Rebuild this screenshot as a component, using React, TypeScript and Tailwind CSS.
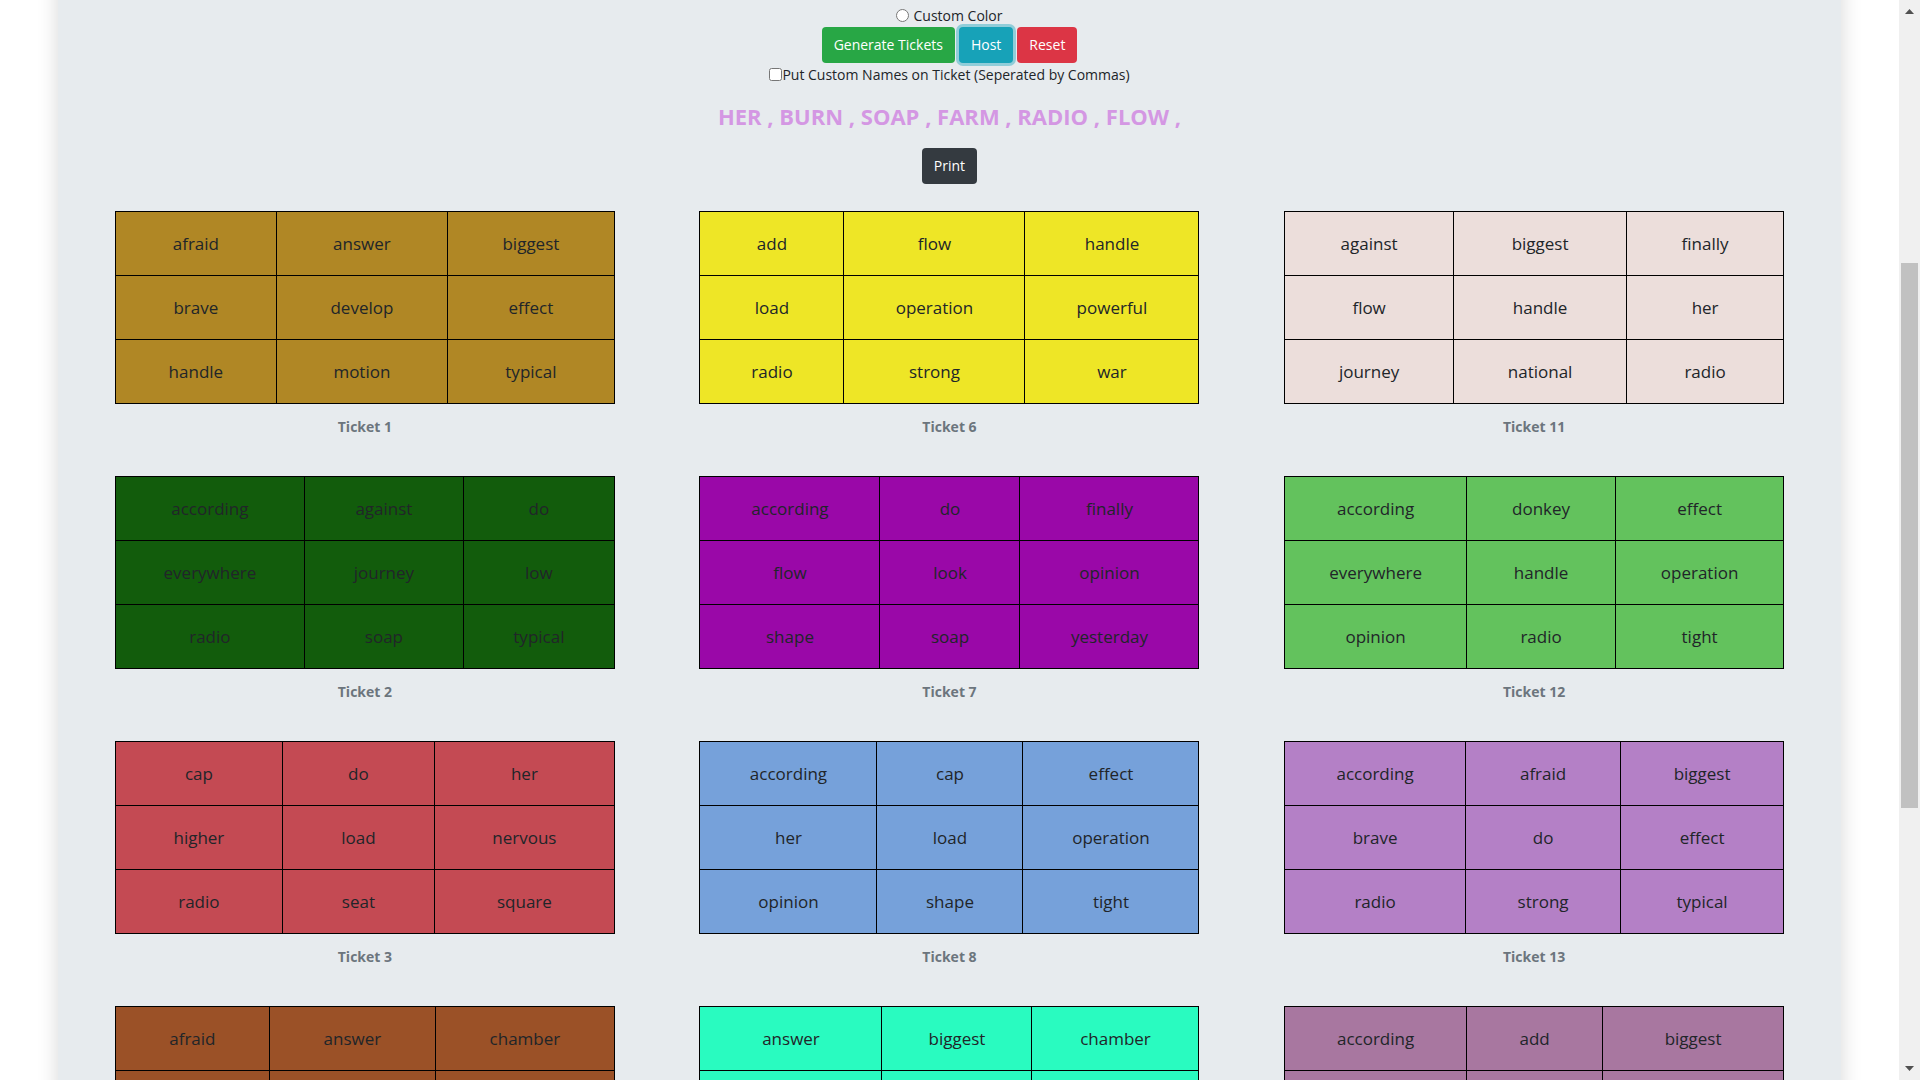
const tickets = [
  { id: 1, color: "#b08725", cols: [161, 171, 167], rows: [["afraid", "answer", "biggest"], ["brave", "develop", "effect"], ["handle", "motion", "typical"]] },
  { id: 2, color: "#125c0c", cols: [189, 159, 151], rows: [["according", "against", "do"], ["everywhere", "journey", "low"], ["radio", "soap", "typical"]] },
  { id: 3, color: "#c44a53", cols: [167, 152, 180], rows: [["cap", "do", "her"], ["higher", "load", "nervous"], ["radio", "seat", "square"]] },
  { id: 4, color: "#9b5127", cols: [154, 166, 179], rows: [["afraid", "answer", "chamber"], ["", "", ""], ["", "", ""]] },
  { id: 6, color: "#eee626", cols: [144, 181, 174], rows: [["add", "flow", "handle"], ["load", "operation", "powerful"], ["radio", "strong", "war"]] },
  { id: 7, color: "#9a08a8", cols: [180, 140, 179], rows: [["according", "do", "finally"], ["flow", "look", "opinion"], ["shape", "soap", "yesterday"]] },
  { id: 8, color: "#76a1da", cols: [177, 146, 176], rows: [["according", "cap", "effect"], ["her", "load", "operation"], ["opinion", "shape", "tight"]] },
  { id: 9, color: "#29fbc0", cols: [182, 150, 167], rows: [["answer", "biggest", "chamber"], ["", "", ""], ["", "", ""]] },
  { id: 11, color: "#ecdedb", cols: [169, 173, 157], rows: [["against", "biggest", "finally"], ["flow", "handle", "her"], ["journey", "national", "radio"]] },
  { id: 12, color: "#63c25d", cols: [182, 149, 168], rows: [["according", "donkey", "effect"], ["everywhere", "handle", "operation"], ["opinion", "radio", "tight"]] },
  { id: 13, color: "#b480c6", cols: [181, 155, 163], rows: [["according", "afraid", "biggest"], ["brave", "do", "effect"], ["radio", "strong", "typical"]] },
  { id: 14, color: "#a877a0", cols: [182, 136, 181], rows: [["according", "add", "biggest"], ["", "", ""], ["", "", ""]] },
];

type TicketData = (typeof tickets)[number];

function Ticket({ ticket }: { ticket: TicketData }) {
  return (
    <table className="mb-6 w-[499px] table-fixed caption-bottom border-collapse">
      <caption className="pt-[11px] pb-[13px] text-center text-[14px] leading-6 font-bold text-[#6c757d]">Ticket {ticket.id}</caption>
      <colgroup>
        {ticket.cols.map((width, i) => (
          <col key={i} style={{ width }} />
        ))}
      </colgroup>
      <tbody style={{ backgroundColor: ticket.color }}>
        {ticket.rows.map((row, r) => (
          <tr key={r} className="h-16">
            {row.map((word, c) => (
              <td key={c} className="border border-black p-0 text-center text-[17px] leading-7">
                {word}
              </td>
            ))}
          </tr>
        ))}
      </tbody>
    </table>
  );
}

const button = "rounded px-3 py-[6px] text-[14px] leading-6 text-white";

export default function App() {
  return (
    <div className="flex h-screen overflow-hidden bg-white font-['Open_Sans','Noto_Sans',sans-serif] text-[14px] leading-[23px] text-[#212529]">
      <div className="min-w-0 flex-1 px-[3%]">
        <main className="-mt-8 flex min-h-screen flex-col items-center bg-[#e7ebee] px-[15px] pt-9 shadow-[0_0_20px_rgba(0,0,0,0.16)]">
          <label className="flex items-center gap-1">
            <input type="radio" name="color" className="h-[13px] w-[13px]" />
            Custom Color
          </label>
          <div className="flex gap-1">
            <button type="button" className={`${button} bg-[#28a745]`}>Generate Tickets</button>
            <button type="button" className={`${button} bg-[#17a2b8] shadow-[0_0_0_3px_rgba(58,176,195,0.5)]`}>Host</button>
            <button type="button" className={`${button} bg-[#dc3545]`}>Reset</button>
          </div>
          <label className="flex items-center">
            <input type="checkbox" className="h-[13px] w-[13px]" />
            Put Custom Names on Ticket (Seperated by Commas)
          </label>
          <h4 className="mt-4 text-[22px] leading-7 font-bold text-[#d497e3]">HER , BURN , SOAP , FARM , RADIO , FLOW ,</h4>
          <button type="button" className={`${button} mt-[18px] bg-[#343a40]`}>Print</button>
          <div className="mt-[27px] grid w-full grid-flow-col grid-cols-3 grid-rows-4 justify-items-center">
            {tickets.map((ticket) => (
              <Ticket key={ticket.id} ticket={ticket} />
            ))}
          </div>
        </main>
      </div>
      <div className="flex w-[21px] flex-col items-center justify-between bg-[#f0f0f0] py-[9px]" aria-hidden="true">
        <svg width="9" height="5" viewBox="0 0 9 5" fill="#505050"><path d="M0 5 4.500 0 9 5z" /></svg>
        <div className="flex w-full flex-1 flex-col items-center">
          <div className="h-[23.700%]" />
          <div className="h-[51.800%] w-[17px] bg-[#c1c1c1]" />
        </div>
        <svg width="9" height="5" viewBox="0 0 9 5" fill="#505050"><path d="M0 0 4.500 5 9 0z" /></svg>
      </div>
    </div>
  );
}
